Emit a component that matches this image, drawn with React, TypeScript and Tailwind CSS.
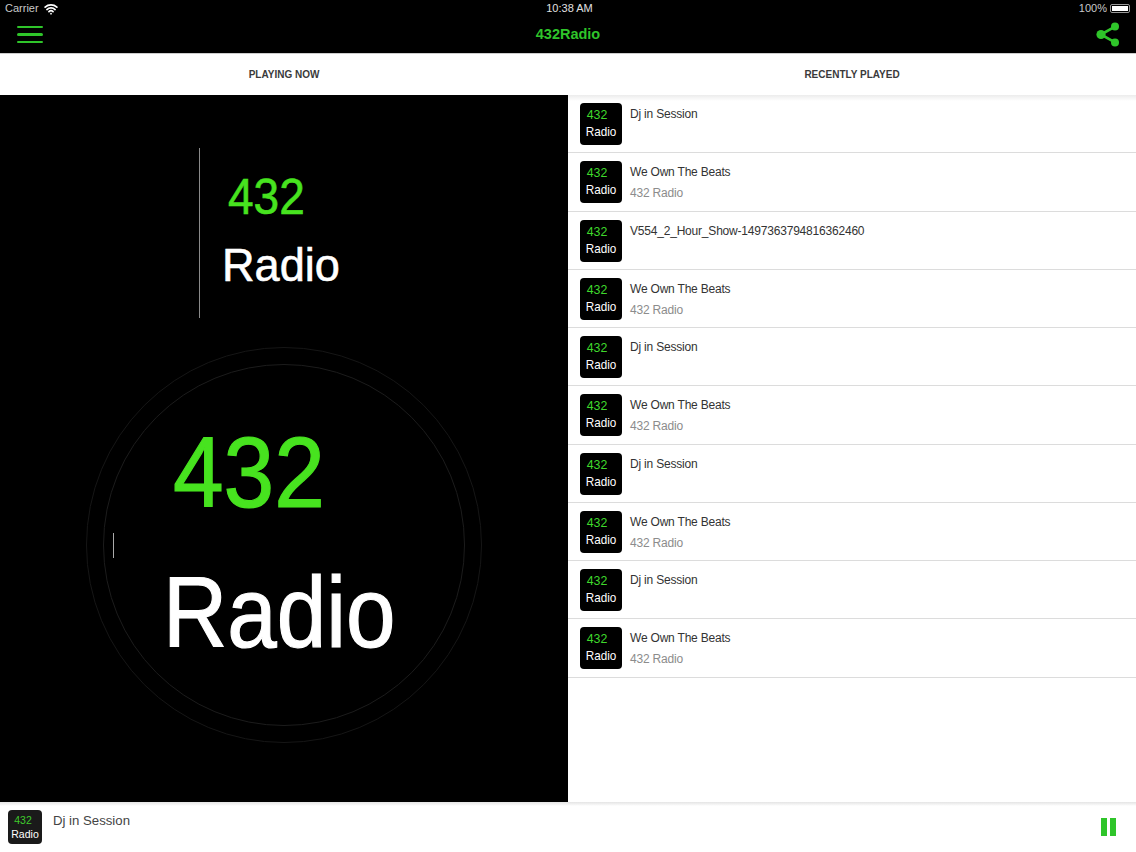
import { Wifi } from "lucide-react";

const tracks = [
  { title: "Dj in Session" },
  { title: "We Own The Beats", sub: "432 Radio" },
  { title: "V554_2_Hour_Show-1497363794816362460" },
  { title: "We Own The Beats", sub: "432 Radio" },
  { title: "Dj in Session" },
  { title: "We Own The Beats", sub: "432 Radio" },
  { title: "Dj in Session" },
  { title: "We Own The Beats", sub: "432 Radio" },
  { title: "Dj in Session" },
  { title: "We Own The Beats", sub: "432 Radio" },
];

function Thumb() {
  return (
    <div className="w-[42px] h-[42px] shrink-0 rounded-[4px] bg-black flex flex-col pt-[3px] text-[13px] leading-[17px]">
      <span className="pl-[7px] text-[#3fd82c] scale-x-95 origin-left">432</span>
      <span className="text-center text-white scale-x-90">Radio</span>
    </div>
  );
}

function ShareIcon() {
  return (
    <svg viewBox="0 0 24 25" className="w-[24px] h-[25px] text-[#2fc52a]" fill="currentColor">
      <circle cx="5" cy="12.5" r="4.6" />
      <circle cx="19" cy="4.6" r="4" />
      <circle cx="19" cy="20.4" r="4" />
      <path d="M5 12.5 19 4.6M5 12.5l14 7.9" stroke="currentColor" strokeWidth="2.6" fill="none" />
    </svg>
  );
}

export default function App() {
  return (
    <div className="w-[1136px] h-[852px] overflow-hidden flex flex-col bg-white font-['Liberation_Sans',Arial,sans-serif]">
      {/* status bar + nav */}
      <div className="h-[53px] shrink-0 bg-black flex flex-col">
        <div className="h-[17px] grid grid-cols-3 items-center px-[5px] text-[11px] text-[#c8c8c8]">
          <div className="flex items-center gap-[5px]">
            Carrier <Wifi className="w-[14px] h-[14px] text-white" strokeWidth={3} />
          </div>
          <div className="text-center text-[#e0e0e0] pl-[3px]">10:38 AM</div>
          <div className="flex items-center justify-end gap-[3px]">
            100%
            <div className="w-[20px] h-[9px] border border-[#999] rounded-[2px] p-px mr-[1px]">
              <div className="w-full h-full bg-white" />
            </div>
          </div>
        </div>
        <div className="flex-1 flex items-center justify-between pl-[17px] pr-[16px] pb-[1px]">
          <div className="w-[26px] flex flex-col gap-[5px]">
            <div className="h-[2.5px] rounded-full bg-[#2fc52a]" />
            <div className="h-[2.5px] rounded-full bg-[#2fc52a]" />
            <div className="h-[2.5px] rounded-full bg-[#2fc52a]" />
          </div>
          <span className="text-[14.5px] font-bold text-[#2fc52a] pr-[3px]">432Radio</span>
          <ShareIcon />
        </div>
      </div>

      {/* tabs */}
      <div className="h-[42px] shrink-0 grid grid-cols-2 items-center text-center text-[10px] font-bold text-[#3a3a3a] border-t border-[#ccc]">
        <div>PLAYING NOW</div>
        <div>RECENTLY PLAYED</div>
      </div>

      <div className="flex-1 min-h-0 flex">
        {/* now playing */}
        <div className="w-[568px] shrink-0 bg-black flex flex-col items-center">
          <div className="mt-[53px] w-[170px] h-[170px] mr-[1px] border-l border-[#8a8a8a] flex flex-col [-webkit-text-stroke:0.6px]">
            <span className="mt-[19px] ml-[28px] text-[50px] leading-[60px] text-[#47e31f] scale-x-[.92] origin-left">432</span>
            <span className="mt-[8px] ml-[22px] text-[47px] leading-[60px] text-white scale-x-[.96] origin-left">Radio</span>
          </div>
          <div className="relative mt-[29px] w-[396px] h-[396px] rounded-full border border-[#161616] flex items-center justify-center">
            <div className="w-[362px] h-[362px] rounded-full border border-[#1c1c1c] flex flex-col [-webkit-text-stroke:1.2px]">
              <span className="mt-[45px] ml-[69px] text-[100px] leading-[125px] text-[#47e31f] scale-x-[.91] origin-left">432</span>
              <span className="mt-[15px] ml-[59px] text-[100px] leading-[125px] text-white scale-x-[.89] origin-left">Radio</span>
            </div>
            <div className="absolute left-[26px] top-[185px] w-px h-[25px] bg-[#aaa]" />
          </div>
        </div>

        {/* recently played */}
        <div className="flex-1 flex flex-col relative">
          <div className="absolute top-0 inset-x-0 h-[6px] bg-gradient-to-b from-[#ececec] to-white" />
          {tracks.map((t, i) => (
            <div key={i} className="relative h-[58.25px] flex items-start gap-[8px] pl-[12px] pt-[8px] border-b border-[#dcdcdc]">
              <Thumb />
              <div className="pt-[2px] text-[12px] tracking-[-0.2px] leading-[18px] text-[#333]">
                <div>{t.title}</div>
                {t.sub && <div className="mt-[3px] text-[#8c8c8c]">{t.sub}</div>}
              </div>
            </div>
          ))}
        </div>
      </div>

      {/* mini player */}
      <div className="relative h-[50px] shrink-0 flex items-start pl-[8px] pr-[20px] pt-[8px]">
        <div className="absolute top-0 inset-x-0 h-[4px] bg-gradient-to-b from-[#e4e4e4] to-white" />
        <div className="w-[34px] h-[34px] rounded-[4px] bg-[#1a1a1a] flex flex-col items-center pt-[3px] text-[10.5px] leading-[14px]">
          <span className="text-[#3fc92c] pr-[4px]">432</span>
          <span className="text-white">Radio</span>
        </div>
        <div className="ml-[11px] mt-[1px] text-[13.2px] leading-[20px] text-[#444]">Dj in Session</div>
        <div className="ml-auto mt-[8px] flex gap-[3px]">
          <div className="w-[6px] h-[18px] bg-[#2fc52a]" />
          <div className="w-[6px] h-[18px] bg-[#2fc52a]" />
        </div>
      </div>
    </div>
  );
}
